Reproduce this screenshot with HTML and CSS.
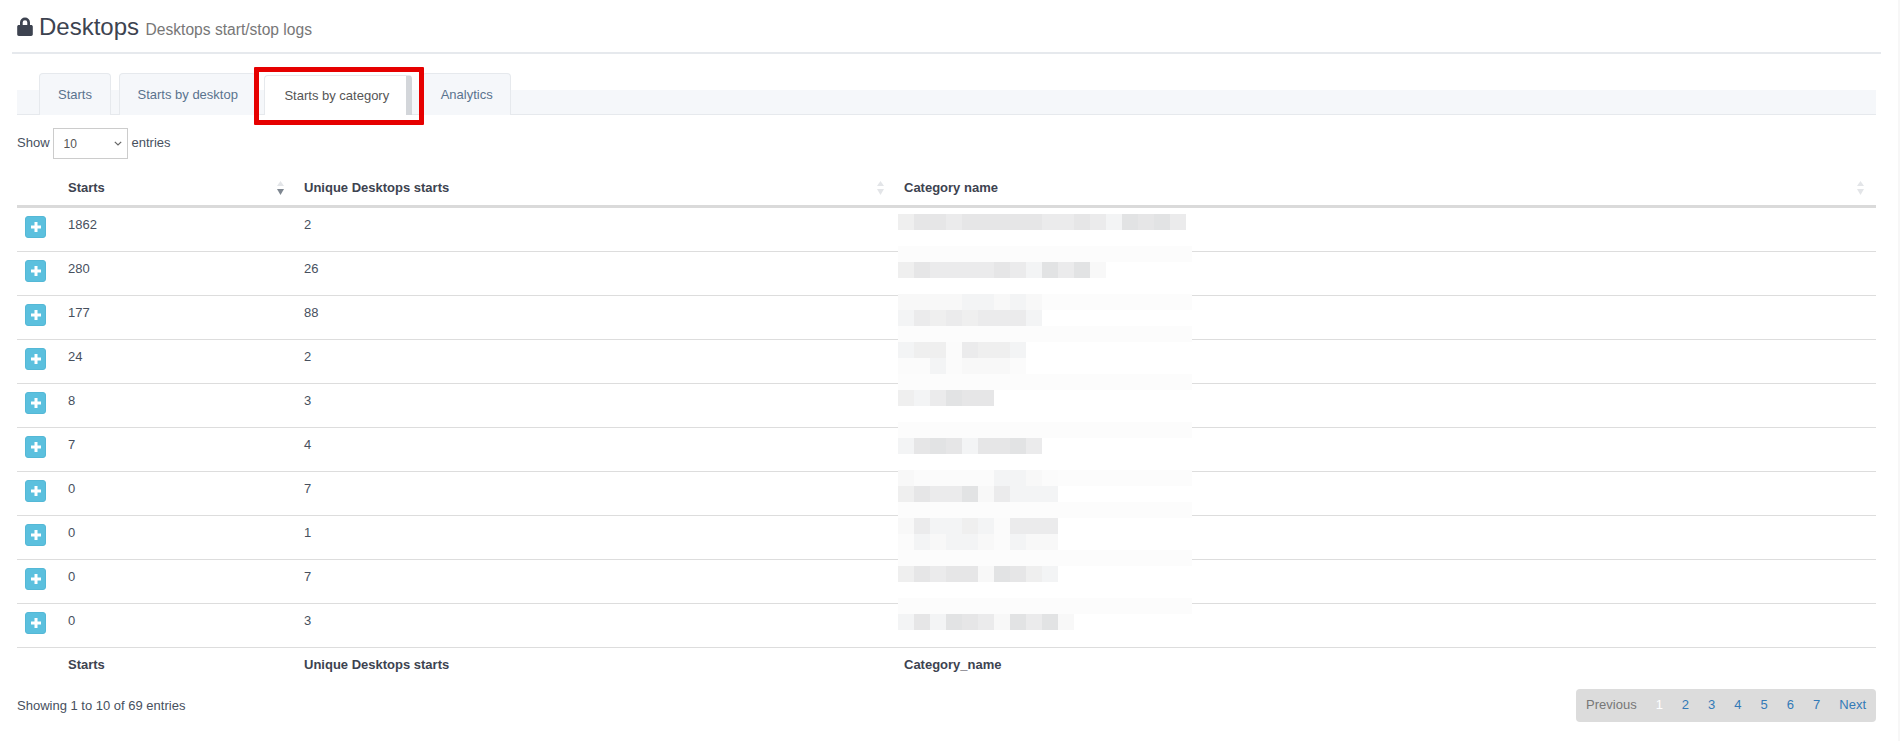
FILE: index.html
```html
<!DOCTYPE html>
<html lang="en">
<head>
<meta charset="utf-8">
<title>Desktops</title>
<link rel="stylesheet" href="styles.css">
</head>
<body>
<div class="page">
  <header class="page-title">
    <svg class="lock" viewBox="0 0 16 19" aria-hidden="true"><path d="M3 8V5.500a5 5 0 0 1 10 0V8h1.200c.8 0 1.600.7 1.600 1.500v7.800c0 .9-.8 1.600-1.600 1.600H1.800c-.9 0-1.600-.7-1.600-1.600V9.500C.2 8.700.9 8 1.800 8zm2.700 0h4.600V5.500a2.300 2.300 0 0 0-4.600 0z"/></svg>
    <h3>Desktops</h3>
    <small>Desktops start/stop logs</small>
  </header>

  <section class="panel">
    <ul class="tabs">
      <li class="tab tab-starts">Starts</li>
      <li class="tab tab-desktop">Starts by desktop</li>
      <li class="tab tab-active">Starts by category</li>
      <li class="tab tab-analytics">Analytics</li>
    </ul>

    <div class="length">
      <label for="len">Show</label>
      <select id="len"><option>10</option><option>25</option><option>50</option></select>
      <span>entries</span>
    </div>

    <div class="table-wrap">
      <table>
        <colgroup><col class="c-ctl"><col class="c-starts"><col class="c-unique"><col class="c-name"></colgroup>
        <thead>
          <tr>
            <th></th>
            <th>Starts<svg class="sort" viewBox="0 0 7 14"><path class="off" d="M3.500 0 7 5H0z"/><path class="on" d="M0 8h7l-3.500 6z"/></svg></th>
            <th>Unique Desktops starts<svg class="sort" viewBox="0 0 7 14"><path class="off" d="M3.500 0 7 5H0z"/><path class="off" d="M0 8h7l-3.500 6z"/></svg></th>
            <th>Category name<svg class="sort" viewBox="0 0 7 14"><path class="off" d="M3.500 0 7 5H0z"/><path class="off" d="M0 8h7l-3.500 6z"/></svg></th>
          </tr>
        </thead>
        <tbody>
          <tr><td><span class="plus"><svg viewBox="0 0 10 10"><path d="M5 0v10M0 5h10"/></svg></span></td><td>1862</td><td>2</td><td></td></tr>
          <tr><td><span class="plus"><svg viewBox="0 0 10 10"><path d="M5 0v10M0 5h10"/></svg></span></td><td>280</td><td>26</td><td></td></tr>
          <tr><td><span class="plus"><svg viewBox="0 0 10 10"><path d="M5 0v10M0 5h10"/></svg></span></td><td>177</td><td>88</td><td></td></tr>
          <tr><td><span class="plus"><svg viewBox="0 0 10 10"><path d="M5 0v10M0 5h10"/></svg></span></td><td>24</td><td>2</td><td></td></tr>
          <tr><td><span class="plus"><svg viewBox="0 0 10 10"><path d="M5 0v10M0 5h10"/></svg></span></td><td>8</td><td>3</td><td></td></tr>
          <tr><td><span class="plus"><svg viewBox="0 0 10 10"><path d="M5 0v10M0 5h10"/></svg></span></td><td>7</td><td>4</td><td></td></tr>
          <tr><td><span class="plus"><svg viewBox="0 0 10 10"><path d="M5 0v10M0 5h10"/></svg></span></td><td>0</td><td>7</td><td></td></tr>
          <tr><td><span class="plus"><svg viewBox="0 0 10 10"><path d="M5 0v10M0 5h10"/></svg></span></td><td>0</td><td>1</td><td></td></tr>
          <tr><td><span class="plus"><svg viewBox="0 0 10 10"><path d="M5 0v10M0 5h10"/></svg></span></td><td>0</td><td>7</td><td></td></tr>
          <tr><td><span class="plus"><svg viewBox="0 0 10 10"><path d="M5 0v10M0 5h10"/></svg></span></td><td>0</td><td>3</td><td></td></tr>
        </tbody>
        <tfoot>
          <tr><th></th><th>Starts</th><th>Unique Desktops starts</th><th>Category_name</th></tr>
        </tfoot>
      </table>

      <div class="mosaic" aria-hidden="true">
        <div class="mr"><i class="d4"></i><i class="d2"></i><i class="d2"></i><i class="d3"></i><i class="d2"></i><i class="d2"></i><i class="d2"></i><i class="d2"></i><i class="d2"></i><i class="d3"></i><i class="d3"></i><i class="d2"></i><i class="d3"></i><i class="d5"></i><i class="d1"></i><i class="d2"></i><i class="d1"></i><i class="d3"></i></div>
        <div class="mr"></div>
        <div class="mr band"></div>
        <div class="mr"><i class="d4"></i><i class="d2"></i><i class="d3"></i><i class="d3"></i><i class="d3"></i><i class="d3"></i><i class="d2"></i><i class="d3"></i><i class="d5"></i><i class="d1"></i><i class="d3"></i><i class="d1"></i><i class="d6"></i></div>
        <div class="mr"></div>
        <div class="mr band"><i class="d6"></i><i class="d6"></i><i class="d6"></i><i class="d6"></i><i class="d5"></i><i class="d5"></i><i class="d6"></i><i class="d5"></i><i class="d6"></i></div>
        <div class="mr"><i class="d5"></i><i class="d3"></i><i class="d4"></i><i class="d3"></i><i class="d4"></i><i class="d3"></i><i class="d3"></i><i class="d3"></i><i class="d5"></i></div>
        <div class="mr band"></div>
        <div class="mr"><i class="d5"></i><i class="d4"></i><i class="d4"></i><i class="d7"></i><i class="d3"></i><i class="d4"></i><i class="d4"></i><i class="d5"></i></div>
        <div class="mr"><i class="d7"></i><i class="d7"></i><i class="d5"></i><i class="d7"></i><i class="d6"></i><i class="d6"></i><i class="d6"></i><i class="d7"></i></div>
        <div class="mr band"></div>
        <div class="mr"><i class="d4"></i><i class="d5"></i><i class="d3"></i><i class="d1"></i><i class="d2"></i><i class="d2"></i></div>
        <div class="mr"></div>
        <div class="mr band"></div>
        <div class="mr"><i class="d5"></i><i class="d2"></i><i class="d1"></i><i class="d2"></i><i class="d5"></i><i class="d2"></i><i class="d2"></i><i class="d1"></i><i class="d3"></i></div>
        <div class="mr"></div>
        <div class="mr band"><i class="d6"></i><i class="d7"></i><i class="d7"></i><i class="d7"></i><i class="d7"></i><i class="d7"></i><i class="d5"></i><i class="d5"></i><i class="d6"></i><i class="d7"></i></div>
        <div class="mr"><i class="d4"></i><i class="d2"></i><i class="d3"></i><i class="d3"></i><i class="d1"></i><i class="d6"></i><i class="d3"></i><i class="d5"></i><i class="d5"></i><i class="d5"></i></div>
        <div class="mr band"></div>
        <div class="mr"><i class="d6"></i><i class="d3"></i><i class="d5"></i><i class="d5"></i><i class="d4"></i><i class="d5"></i><i class="d7"></i><i class="d3"></i><i class="d3"></i><i class="d3"></i></div>
        <div class="mr"><i class="d7"></i><i class="d5"></i><i class="d6"></i><i class="d5"></i><i class="d5"></i><i class="d6"></i><i class="d7"></i><i class="d5"></i><i class="d6"></i><i class="d6"></i></div>
        <div class="mr band"></div>
        <div class="mr"><i class="d4"></i><i class="d2"></i><i class="d3"></i><i class="d2"></i><i class="d2"></i><i class="d6"></i><i class="d1"></i><i class="d2"></i><i class="d4"></i><i class="d5"></i></div>
        <div class="mr"></div>
        <div class="mr band"></div>
        <div class="mr"><i class="d5"></i><i class="d2"></i><i class="d5"></i><i class="d1"></i><i class="d2"></i><i class="d3"></i><i class="d6"></i><i class="d1"></i><i class="d3"></i><i class="d1"></i><i class="d6"></i></div>
      </div>
    </div>

    <div class="table-foot">
      <div class="info">Showing 1 to 10 of 69 entries</div>
      <nav class="pager">
        <a class="pg-prev">Previous</a><a class="pg-cur">1</a><a>2</a><a>3</a><a>4</a><a>5</a><a>6</a><a>7</a><a class="pg-next">Next</a>
      </nav>
    </div>
  </section>

  <div class="highlight"></div>
</div>
</body>
</html>
```
FILE: styles.css
```css
* { box-sizing: border-box; }
html, body { margin: 0; height: 741px; overflow: hidden; }
body {
  background: #f7f7f7;
  font-family: "Liberation Sans", Arial, sans-serif;
  font-size: 13px;
  line-height: 18.57px;
  color: #47505e;
}
.page {
  position: relative;
  width: 1898px;
  height: 741px;
  background: #fff;
  padding-right: 22px;
}
.page-title {
  display: flex;
  align-items: baseline;
  margin-left: 12px;
  margin-right: -5px;
  height: 54px;
  padding: 14px 0 0 5px;
  border-bottom: 2px solid #e6e9ed;
}
.lock { width: 16px; height: 19px; fill: #3d4350; margin-right: 6px; align-self: flex-start; margin-top: 3px; }
.page-title h3 { margin: 0; font-size: 24px; line-height: 26px; font-weight: 400; color: #3d4350; }
.page-title small { margin-left: 6.500px; font-size: 15.600px; line-height: 18px; color: #777; }

.panel { padding-left: 17px; }
.tabs {
  display: flex;
  list-style: none;
  margin: 36px 0 0;
  padding: 0 0 0 22px;
  height: 25px;
  background: #f5f7fa;
  border-bottom: 1px solid #e6e9ed;
}
.tab {
  height: 42px;
  margin-top: -17px;
  padding: 12px 17.500px 0;
  background: #f5f7fa;
  border: 1px solid #e6e9ed;
  border-bottom: 0;
  border-radius: 4px 4px 0 0;
  color: #5a738e;
}
.tab-starts { padding: 12px 18px 0; }
.tab-desktop { margin-left: 8px; }
.tab-active {
  margin-left: 8px;
  margin-top: -15px;
  height: 40px;
  padding: 11px 17px 0 19px;
  background: #fff;
  color: #555;
  border-right: 6px solid #d3d6da;
}
.tab-analytics { margin-left: 10px; padding: 12px 17.500px 0; }

.length { display: flex; align-items: center; height: 31px; margin-top: 13px; }
.length select {
  appearance: none;
  width: 75px;
  height: 31px;
  margin: 0 4px 0 3px;
  padding: 0 7px 0 10px;
  border: 1px solid #ccc;
  background: #fff url("data:image/svg+xml,%3Csvg xmlns='http://www.w3.org/2000/svg' width='8' height='5'%3E%3Cpath d='M.8.8 4 4 7.200.8' fill='none' stroke='%23666' stroke-width='1.200'/%3E%3C/svg%3E") no-repeat right 5px center;
  color: #555;
  font: 12px "Liberation Sans", Arial, sans-serif;
}

.table-wrap { position: relative; margin-top: 11px; }
table { width: 100%; table-layout: fixed; border-collapse: separate; border-spacing: 0; }
.c-ctl { width: 43px; }
.c-starts { width: 236px; }
.c-unique { width: 600px; }
.c-name { width: 980px; }
th { text-align: left; padding: 8px; font-weight: 700; color: #3d4350; }
thead th { padding: 9px 8px 7px; border-bottom: 3px solid #dadada; }
td { height: 44px; padding: 8px; vertical-align: top; border-bottom: 1px solid #ddd; }
td:first-child { padding: 8px 0; }
.sort { float: right; width: 7px; height: 14px; margin: 2px 4px 0 0; }
.sort .off { fill: #e3e5e8; }
.sort .on { fill: #7f8791; }
.plus {
  display: flex;
  align-items: center;
  justify-content: center;
  width: 21px;
  height: 22px;
  margin-left: 8px;
  border-radius: 3px;
  background: #5bc0de;
  border: 1px solid #54b8d6;
}
.plus svg { width: 10px; height: 10px; fill: none; stroke: #fff; stroke-width: 3; }

.mosaic { position: absolute; left: 881px; top: 44px; width: 294px; background: #fff; }
.mr { display: flex; height: 16px; }
.band { background: #fcfcfc; }
.mr i { display: block; width: 16px; height: 16px; }
.d1 { background: #e2e3e4; }
.d2 { background: #e6e6e7; }
.d3 { background: #ebebec; }
.d4 { background: #efefef; }
.d5 { background: #f3f4f5; }
.d6 { background: #f8f8f8; }
.d7 { background: #fbfbfb; }

.table-foot { display: flex; justify-content: space-between; align-items: flex-start; margin-top: 7px; }
.info { padding-top: 8px; }
.pager {
  display: flex;
  height: 33px;
  align-items: center;
  padding: 0 10px 0 0;
  background: #dcdcdc;
  border-radius: 4px;
  color: #337ab7;
}
.pager a { padding: 0 9.500px; }
.pager .pg-prev { padding: 0 9.500px 0 10px; color: #777; }
.pager .pg-cur { color: #fff; }
.pager .pg-next { padding: 0 0 0 9.500px; }

.highlight {
  position: absolute;
  left: 254px;
  top: 67px;
  width: 170px;
  height: 58px;
  border: 5px solid #e60000;
  border-radius: 1px;
}
```
